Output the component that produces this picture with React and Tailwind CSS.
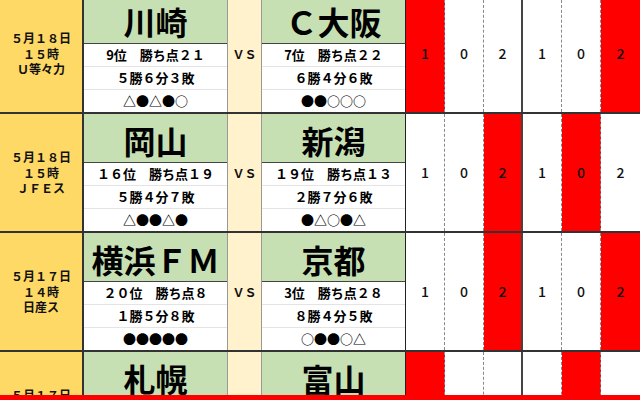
import React from "react";

const rows = [
  {
    date: ["５月１８日", "１５時", "Ｕ等々力"],
    home: { name: "川崎", rank: "9位　勝ち点２１", rec: "５勝６分３敗", form: "△●△●○" },
    away: { name: "Ｃ大阪", rank: "7位　勝ち点２２", rec: "６勝４分６敗", form: "●●○○○" },
    scores: ["1", "0", "2", "1", "0", "2"],
    red: [true, false, false, false, false, true],
  },
  {
    date: ["５月１８日", "１５時", "ＪＦＥス"],
    home: { name: "岡山", rank: "１６位　勝ち点１９", rec: "５勝４分７敗", form: "△●●△●" },
    away: { name: "新潟", rank: "１９位　勝ち点１３", rec: "２勝７分６敗", form: "●△○●△" },
    scores: ["1", "0", "2", "1", "0", "2"],
    red: [false, false, true, false, true, false],
  },
  {
    date: ["５月１７日", "１４時", "日産ス"],
    home: { name: "横浜ＦＭ", rank: "２０位　勝ち点８", rec: "１勝５分８敗", form: "●●●●●" },
    away: { name: "京都", rank: "3位　勝ち点２８", rec: "８勝４分５敗", form: "○●●○△" },
    scores: ["1", "0", "2", "1", "0", "2"],
    red: [false, false, true, false, false, true],
  },
  {
    date: ["５月１７日", "１４時", "大和ハ"],
    home: { name: "札幌", rank: "", rec: "", form: "" },
    away: { name: "富山", rank: "", rec: "", form: "" },
    scores: ["", "", "", "", "", ""],
    red: [true, false, false, false, true, false],
  },
];

const scoreBorders = [
  "border-r border-dashed border-[#888]",
  "border-r border-dashed border-[#888]",
  "border-r-2 border-solid border-[#444]",
  "border-r border-dashed border-[#888]",
  "border-r border-dashed border-[#888]",
  "",
];

function Team({ t, right }) {
  return (
    <div className={`flex flex-col ${right ? "border-r border-[#222]" : "border-r border-[#999]"}`}>
      <div className="h-[49px] shrink-0 bg-[#c6e0b4] border-b border-[#444] flex items-center justify-center pt-[4px] text-[32px] font-bold leading-none text-black">
        {t.name}
      </div>
      <div className="flex-1 flex items-center justify-center text-[13px] font-bold border-b border-[#e4e4e4] bg-white">
        {t.rank}
      </div>
      <div className="flex-1 flex items-center justify-center text-[13px] font-bold border-b border-[#e4e4e4] bg-white">
        {t.rec}
      </div>
      <div className="flex-1 flex items-center justify-center text-[13px] font-bold bg-white">
        {t.form}
      </div>
    </div>
  );
}

function Row({ r }) {
  return (
    <div className="grid grid-cols-[84px_144px_34px_144px_repeat(6,39px)] h-[119px] shrink-0 border-b-2 border-[#333]">
      <div className="bg-[#ffd966] border-r-2 border-[#333] flex flex-col items-center justify-center text-[12px] font-bold leading-[15.5px] text-[#111]">
        {r.date.map((d, i) => (
          <div key={i}>{d}</div>
        ))}
      </div>
      <Team t={r.home} />
      <div className="bg-[#fff2cc] border-r border-[#999] flex items-center justify-center text-[12px] font-bold text-[#111]">
        ＶＳ
      </div>
      <Team t={r.away} right />
      {r.scores.map((s, i) => (
        <div
          key={i}
          className={`${r.red[i] ? "bg-[#ff0000]" : "bg-white"} ${scoreBorders[i]} flex items-center justify-center text-[14px] font-medium text-[#111]`}
        >
          {s}
        </div>
      ))}
    </div>
  );
}

export default function App() {
  return (
    <div className="relative w-[640px] h-[400px] overflow-hidden bg-white font-['Noto_Sans_CJK_JP','Noto_Sans',sans-serif] text-black">
      <div className="flex flex-col -mt-[5px]">
        {rows.map((r, i) => (
          <Row key={i} r={r} />
        ))}
      </div>
      <div className="absolute left-0 bottom-0 w-full h-[5px] bg-[#ff0000]" />
    </div>
  );
}
